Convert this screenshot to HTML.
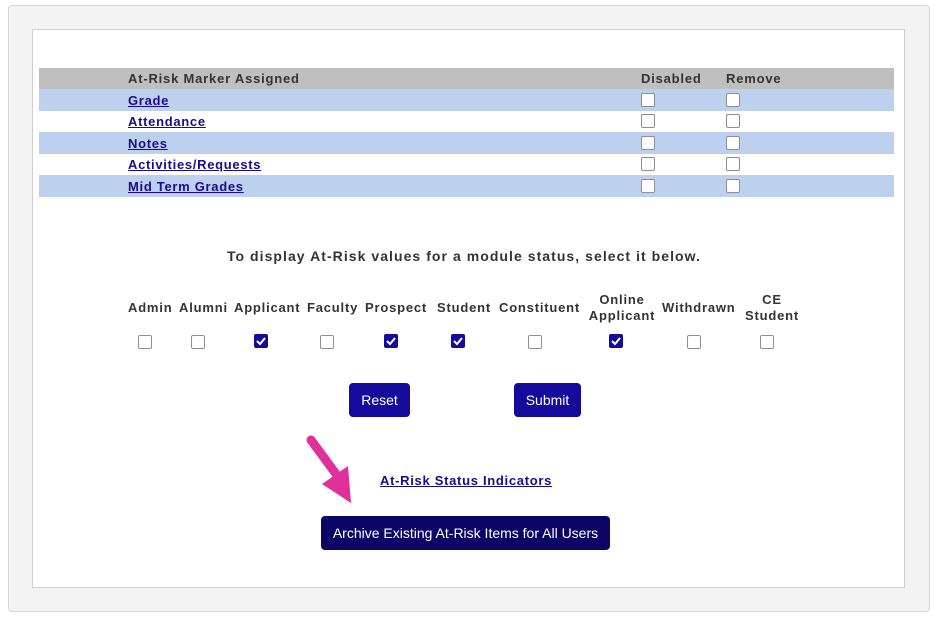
<!DOCTYPE html><html><head><style>
body{margin:0;width:936px;height:618px;background:#fff;font-family:"Liberation Sans",Arial,sans-serif;position:relative;overflow:hidden}
.a{position:absolute}
.outer{left:8px;top:5px;width:920px;height:605px;background:#f3f3f3;border:1px solid #d6d6d6;border-radius:4px}
.inner{left:32px;top:29px;width:871px;height:557px;background:#fff;border:1px solid #cfcfcf}
.t{font-size:13px;font-weight:bold;color:#333;letter-spacing:0.8px}
a{color:#1a0a8f;font-weight:bold;font-size:13px;text-decoration:underline;letter-spacing:0.7px}
.cb{width:12px;height:12px;border:1px solid #8d8d99;border-radius:2px;background:#fff}
.ck{width:14px;height:14px;border-radius:2px;background:#140a9c}
.btn{background:#140a9c;color:#fff;font-size:14px;border-radius:4px;text-align:center;line-height:34px}
</style></head><body>
<div class="a outer"></div><div class="a inner"></div>
<div class="a" style="left:39px;top:68px;width:855px;height:21px;background:#bfbfbf"></div>
<div class="a t" style="left:128px;top:71px">At-Risk Marker Assigned</div>
<div class="a t" style="left:641px;top:71px">Disabled</div>
<div class="a t" style="left:726px;top:71px">Remove</div>
<div class="a" style="left:39px;top:89px;width:855px;height:22px;background:#bdd1ee"></div>
<div class="a" style="left:39px;top:132px;width:855px;height:22px;background:#bdd1ee"></div>
<div class="a" style="left:39px;top:175px;width:855px;height:22px;background:#bdd1ee"></div>
<a class="a" style="left:128px;top:93px">Grade</a>
<a class="a" style="left:128px;top:114px">Attendance</a>
<a class="a" style="left:128px;top:136px">Notes</a>
<a class="a" style="left:128px;top:157px">Activities/Requests</a>
<a class="a" style="left:128px;top:179px">Mid Term Grades</a>
<div class="a cb" style="left:641px;top:93px"></div><div class="a cb" style="left:726px;top:93px"></div>
<div class="a cb" style="left:641px;top:114px"></div><div class="a cb" style="left:726px;top:114px"></div>
<div class="a cb" style="left:641px;top:136px"></div><div class="a cb" style="left:726px;top:136px"></div>
<div class="a cb" style="left:641px;top:157px"></div><div class="a cb" style="left:726px;top:157px"></div>
<div class="a cb" style="left:641px;top:179px"></div><div class="a cb" style="left:726px;top:179px"></div>
<div class="a t" style="left:0;width:928px;text-align:center;top:248px;font-size:14px;letter-spacing:1.05px">To display At-Risk values for a module status, select it below.</div>
<div class="a t" style="left:128px;top:300px">Admin</div>
<div class="a t" style="left:179px;top:300px">Alumni</div>
<div class="a t" style="left:234px;top:300px">Applicant</div>
<div class="a t" style="left:307px;top:300px">Faculty</div>
<div class="a t" style="left:365px;top:300px">Prospect</div>
<div class="a t" style="left:437px;top:300px">Student</div>
<div class="a t" style="left:499px;top:300px">Constituent</div>
<div class="a t" style="left:582px;top:292px;width:80px;text-align:center;line-height:16px">Online<br>Applicant</div>
<div class="a t" style="left:662px;top:300px">Withdrawn</div>
<div class="a t" style="left:736px;top:292px;width:72px;text-align:center;line-height:16px">CE<br>Student</div>
<div class="a cb" style="left:138px;top:335px"></div>
<div class="a cb" style="left:191px;top:335px"></div>
<div class="a ck" style="left:254px;top:334px"></div>
<div class="a cb" style="left:320px;top:335px"></div>
<div class="a ck" style="left:384px;top:334px"></div>
<div class="a ck" style="left:451px;top:334px"></div>
<div class="a cb" style="left:528px;top:335px"></div>
<div class="a ck" style="left:609px;top:334px"></div>
<div class="a cb" style="left:687px;top:335px"></div>
<div class="a cb" style="left:760px;top:335px"></div>
<svg class="a" style="left:0;top:0" width="936" height="618">
<g fill="none" stroke="#fff" stroke-width="2">
<path d="M257 341l3 3 5-6"/><path d="M387 341l3 3 5-6"/><path d="M454 341l3 3 5-6"/><path d="M612 341l3 3 5-6"/></g>
<path d="M311 440L336 474" stroke="#e0309a" stroke-width="9" stroke-linecap="round"/>
<path d="M322 484L348 466L351 503Z" fill="#e0309a"/>
</svg>
<div class="a btn" style="left:349px;top:383px;width:61px">Reset</div>
<div class="a btn" style="left:514px;top:383px;width:67px">Submit</div>
<a class="a" style="left:380px;top:473px">At-Risk Status Indicators</a>
<div class="a btn" style="left:321px;top:516px;width:289px;background:#0d0566">Archive Existing At-Risk Items for All Users</div>
</body></html>
